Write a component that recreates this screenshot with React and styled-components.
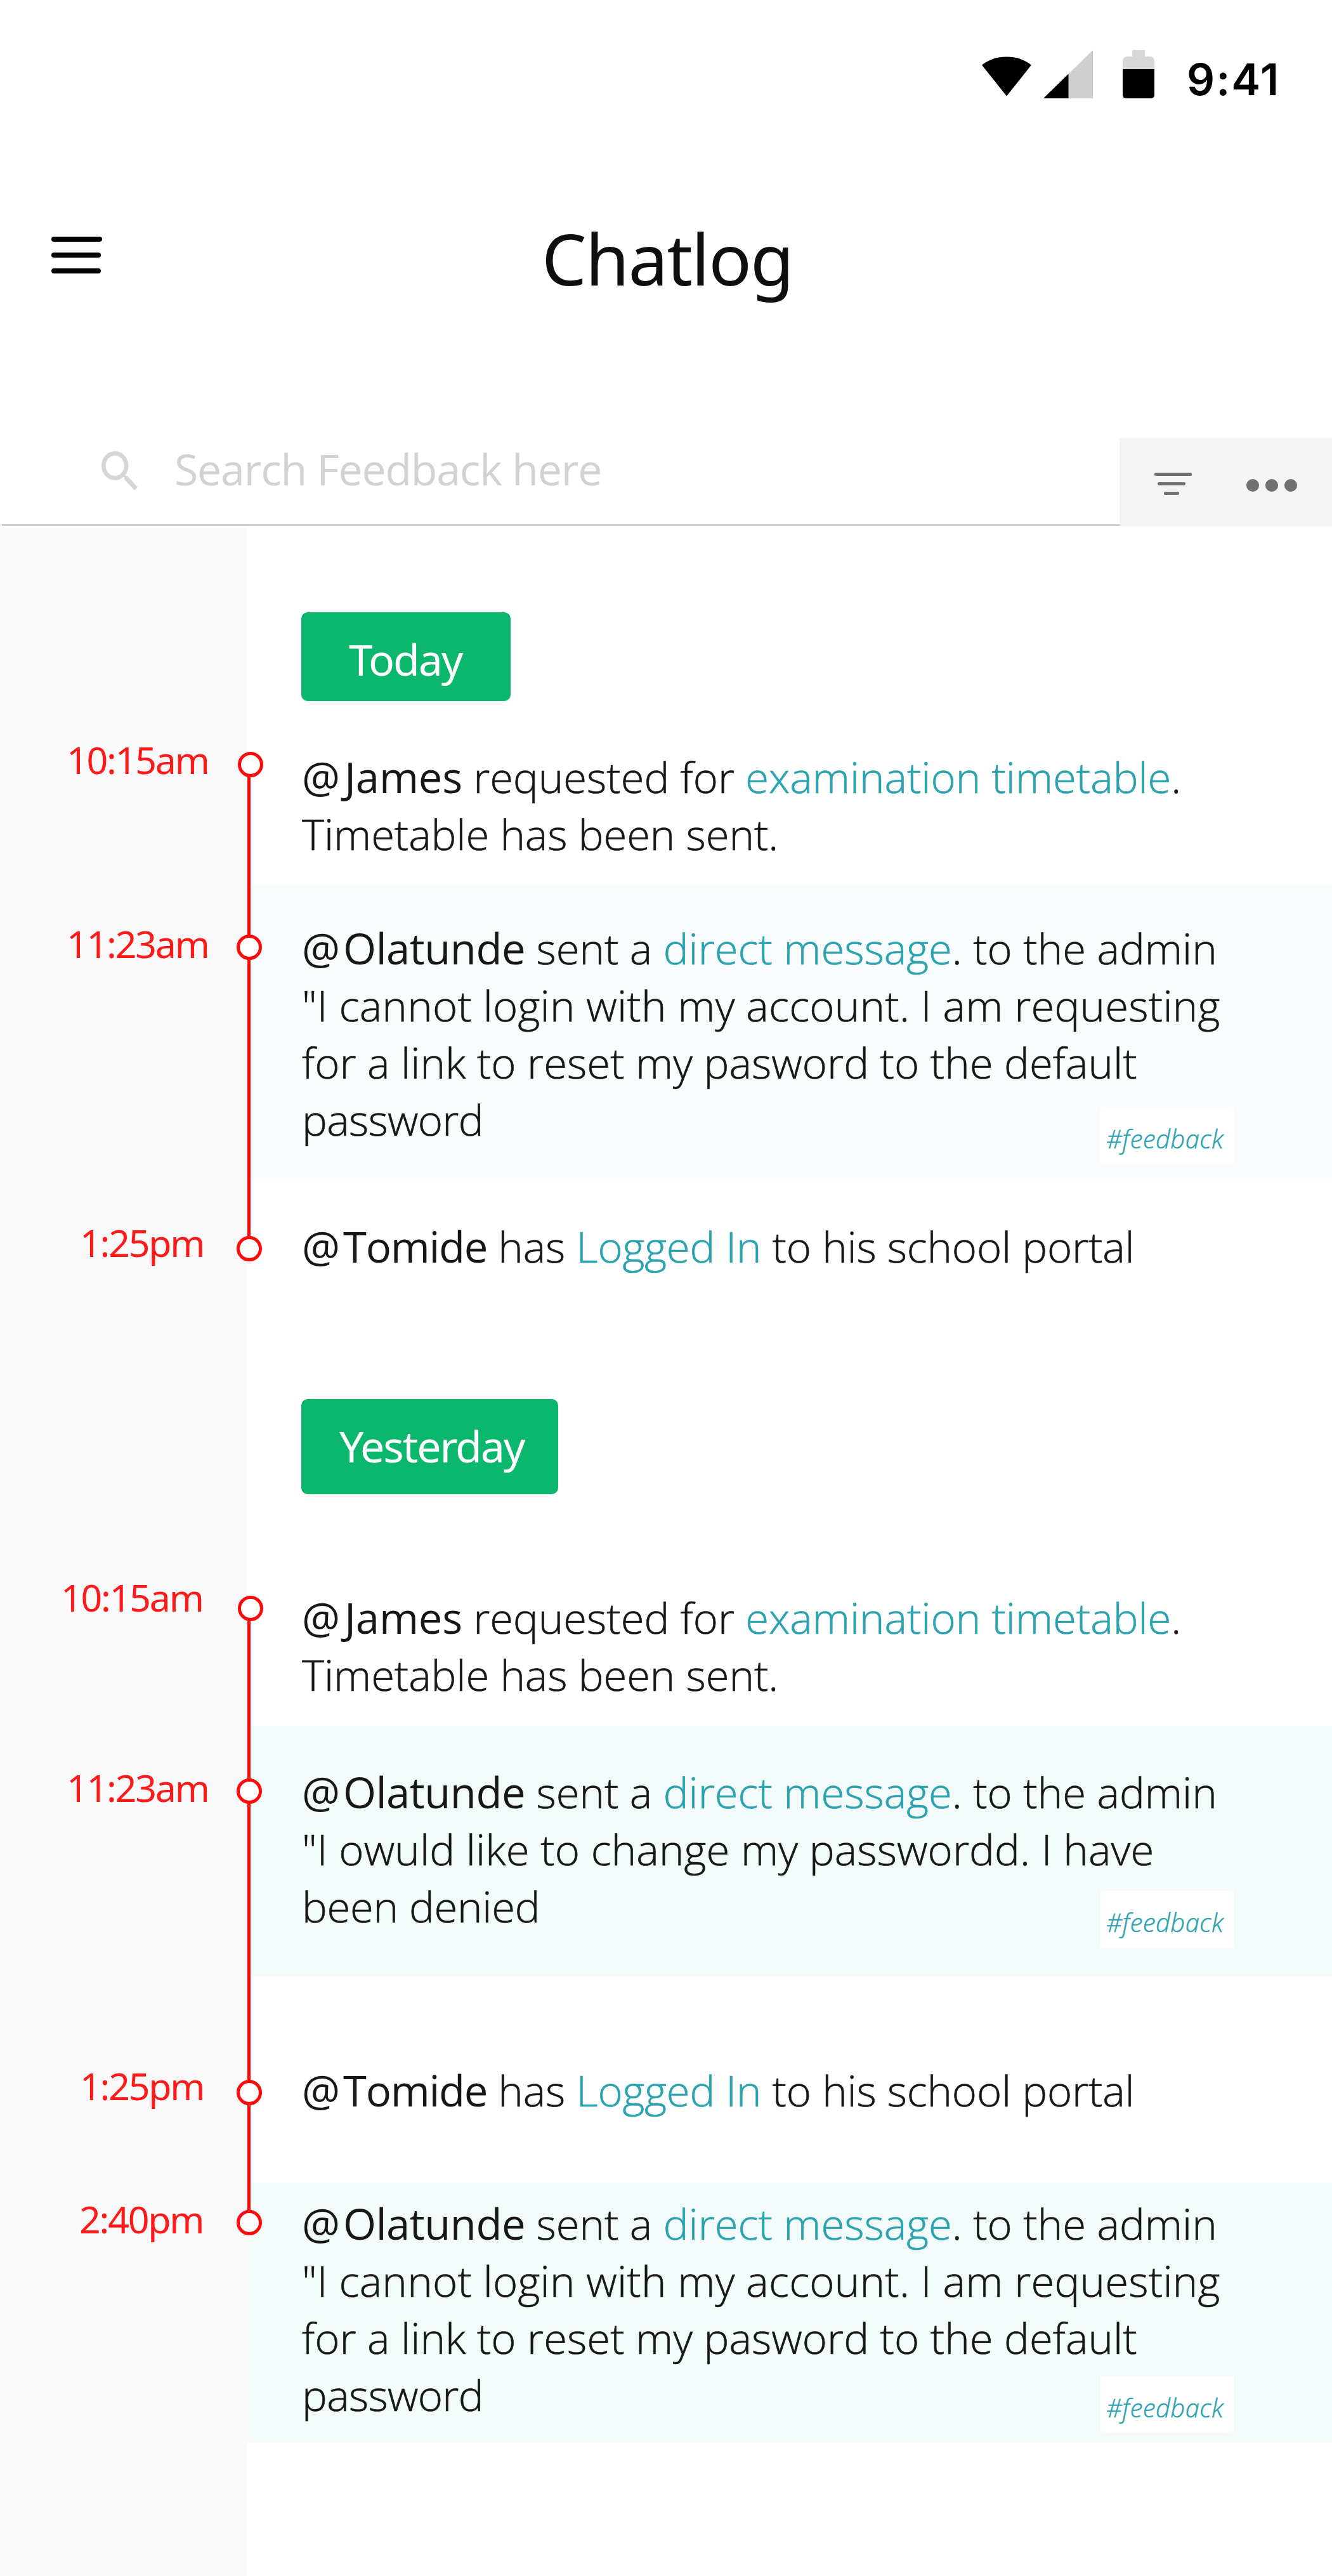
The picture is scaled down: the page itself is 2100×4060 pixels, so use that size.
import React from "react";
import styled, { createGlobalStyle } from "styled-components";

const GlobalStyle = createGlobalStyle`
  * { box-sizing: border-box; }
  body { margin: 0; background: #fff; }
`;

const Screen = styled.div`
  width: 2100px;
  height: 4060px;
  display: flex;
  flex-direction: column;
  overflow: hidden;
  background: #fff;
  font-family: "Open Sans", "Noto Sans", sans-serif;
  color: #171717;
`;

/* Status bar */

const StatusBar = styled.div`
  height: 180px;
  flex: none;
  display: flex;
  align-items: flex-start;
  justify-content: flex-end;
  padding: 79px 84px 0 0;
`;

const WifiIcon = styled.svg`
  width: 78px;
  height: 63px;
  margin: 10px 19px 0 0;
`;

const SignalIcon = styled.svg`
  width: 78px;
  height: 76px;
  margin-right: 47px;
`;

const BatteryIcon = styled.svg`
  width: 50px;
  height: 76px;
  margin-right: 51px;
`;

const Clock = styled.div`
  width: 145px;
  font: 600 69px/84px Inter, sans-serif;
  letter-spacing: 2px;
  margin-top: 4px;
  color: #000;
  white-space: nowrap;
`;

/* Header */

const Header = styled.header`
  height: 510px;
  flex: none;
  display: flex;
  align-items: flex-start;
  padding: 152px 0 0 81px;
`;

const MenuButton = styled.div`
  width: 80px;
  margin: 41px 693px 0 0;
  display: flex;
  flex-direction: column;
  gap: 17px;
`;

const MenuBar = styled.span`
  width: ${(p) => p.$width}px;
  height: 8px;
  border-radius: 4px;
  background: #000;
`;

const Title = styled.h1`
  margin: 0;
  font: 400 112px/150px "Noto Sans", sans-serif;
  letter-spacing: -1.8px;
  color: #100f10;
`;

/* Search */

const Toolbar = styled.div`
  height: 140px;
  flex: none;
  display: flex;
`;

const SearchField = styled.div`
  width: 1762px;
  height: 139px;
  margin-left: 3px;
  display: flex;
  align-items: flex-start;
  border-bottom: 3px solid #d0d0d0;
  padding-left: 157px;
`;

const SearchIcon = styled.svg`
  width: 57px;
  height: 62px;
  margin: 21px 58px 0 0;
`;

const Placeholder = styled.span`
  font-size: 68px;
  line-height: 98px;
  letter-spacing: -1.2px;
  color: #d2d2d2;
  white-space: nowrap;
`;

const Actions = styled.div`
  flex: 1;
  display: flex;
  align-items: flex-start;
  background: #f4f4f4;
  padding-left: 55px;
`;

const Filter = styled.div`
  width: 59px;
  margin: 55px 86px 0 0;
  display: flex;
  flex-direction: column;
  gap: 10px;
`;

const FilterBar = styled.span`
  width: ${(p) => p.$width}px;
  height: 5px;
  margin-left: ${(p) => p.$indent}px;
  border-radius: 2px;
  background: #707070;
`;

const More = styled.div`
  display: flex;
  gap: 10px;
  margin-top: 65px;
`;

const Dot = styled.span`
  width: 20px;
  height: 20px;
  border-radius: 50%;
  background: #707070;
`;

/* Timeline */

const Timeline = styled.main`
  flex: 1;
  padding-top: 135px;
  background: linear-gradient(to right, #f9f9f9 390px, transparent 390px);
`;

const DayBadge = styled.div`
  width: ${(p) => p.$width}px;
  height: ${(p) => p.$height}px;
  margin-left: 475px;
  padding: 4px 0 0 ${(p) => p.$indent}px;
  border-radius: 10px;
  background: #0ab76c;
  color: #fff;
  font: 400 68px/140px "Noto Sans", sans-serif;
  letter-spacing: -2.1px;
`;

const Entries = styled.div`
  position: relative;
  margin-bottom: ${(p) => p.$after}px;
`;

const Track = styled.span`
  position: absolute;
  left: 390px;
  top: ${(p) => p.$top}px;
  width: 5px;
  height: ${(p) => p.$length}px;
  background: #ff0a0a;
`;

const Entry = styled.article`
  position: relative;
  display: grid;
  grid-template-columns: 390px 1fr;
  height: ${(p) => p.$height}px;
`;

const Time = styled.time`
  padding: ${(p) => p.$top}px 0 0 ${(p) => p.$left}px;
  font: 400 59px/80px "Noto Sans", sans-serif;
  letter-spacing: -2.2px;
  color: #ff1a1a;
  white-space: nowrap;
`;

const Message = styled.div`
  padding: ${(p) => p.$top}px 0 0 86px;
  background: ${(p) => p.$tint || "transparent"};
  font-size: 67px;
  font-weight: 300;
  line-height: 90px;
  -webkit-text-stroke-width: 0.6px;
`;

const Line = styled.div`
  height: 90px;
  letter-spacing: ${(p) => p.$spacing || 0}px;
  white-space: nowrap;
`;

const At = styled.span`
  font-weight: 400;
  letter-spacing: 0;
  margin-right: ${(p) => p.$gap}px;
  -webkit-text-stroke-width: 0;
`;

const Name = styled.span`
  font-weight: 400;
  letter-spacing: ${(p) => p.$spacing}px;
  -webkit-text-stroke-width: 0;
`;

const Highlight = styled.span`
  color: #2ba2af;
`;

const Node = styled.span`
  position: absolute;
  z-index: 1;
  left: ${(p) => p.$left}px;
  top: ${(p) => p.$top}px;
  width: 40px;
  height: 40px;
  border: 5px solid #ff0a0a;
  border-radius: 50%;
  background: #fff;
`;

const Tag = styled.span`
  position: absolute;
  left: 1735px;
  top: ${(p) => p.$top}px;
  width: 210px;
  height: 90px;
  padding: 5px 0 0 9px;
  background: #fff;
  color: #2ba2af;
  font-size: 40px;
  font-style: italic;
  font-weight: 300;
  line-height: 90px;
  letter-spacing: 0.5px;
  -webkit-text-stroke-width: 0.5px;
`;

const people = {
  James: { gap: 7, spacing: -0.2 },
  Olatunde: { gap: 5, spacing: -0.5 },
  Tomide: { gap: 5, spacing: -1.3 },
};

const requested = {
  name: "James",
  rest: [" requested for ", "examination timetable", "."],
  spacing: -0.05,
  lines: [["Timetable has been sent.", -0.1]],
};
const loggedIn = {
  name: "Tomide",
  rest: [" has ", "Logged In", " to his school portal"],
  spacing: -0.18,
  lines: [],
};
const messaged = (lines) => ({
  name: "Olatunde",
  rest: [" sent a ", "direct message", ". to the admin"],
  spacing: 0,
  lines,
});
const resetLines = [
  ['"I cannot login with my account. I am requesting', 0.22],
  ["for a link to reset my pasword to the default", 0.04],
  ["password", -0.7],
];
const changeLines = [
  ['"I owuld like to change my passwordd. I have', 0.12],
  ["been denied", -0.3],
];

const days = [
  {
    label: "Today",
    badge: { $width: 330, $height: 140, $indent: 75 },
    after: 135,
    track: { $top: 100, $length: 762 },
    entries: [
      { time: "10:15am", height: 290, timeTop: 52, timeLeft: 105, textTop: 74, node: [375, 80], ...requested },
      { time: "11:23am", height: 465, timeTop: 52, timeLeft: 105, textTop: 54, node: [372.5, 77.5], tint: "#f8fcfd", tag: 350, ...messaged(resetLines) },
      { time: "1:25pm", height: 210, timeTop: 57.5, timeLeft: 126, textTop: 59, node: [372.5, 87.5], ...loggedIn },
    ],
  },
  {
    label: "Yesterday",
    badge: { $width: 405, $height: 150, $indent: 60 },
    after: 0,
    track: { $top: 180, $length: 967 },
    entries: [
      { time: "10:15am", height: 365, timeTop: 122, timeLeft: 96, textTop: 149, node: [375, 160], ...requested },
      { time: "11:23am", height: 395, timeTop: 57, timeLeft: 105, textTop: 59, node: [372.5, 82.5], tint: "#f2fbfa", tag: 260, ...messaged(changeLines) },
      { time: "1:25pm", height: 325, timeTop: 132, timeLeft: 126, textTop: 134, node: [372.5, 162.5], ...loggedIn },
      { time: "2:40pm", height: 410, timeTop: 17, timeLeft: 125, textTop: 19, node: [372.5, 42.5], tint: "#f2fbfa", tag: 305, ...messaged(resetLines) },
    ],
  },
];

function LogEntry({ entry }) {
  const [before, link, after] = entry.rest;
  const person = people[entry.name];
  return (
    <Entry $height={entry.height}>
      <Time $top={entry.timeTop} $left={entry.timeLeft}>{entry.time}</Time>
      <Message $top={entry.textTop} $tint={entry.tint}>
        <Line $spacing={entry.spacing}>
          <At $gap={person.gap}>@</At>
          <Name $spacing={person.spacing}>{entry.name}</Name>
          {before}
          <Highlight>{link}</Highlight>
          {after}
        </Line>
        {entry.lines.map(([text, spacing]) => (
          <Line key={text} $spacing={spacing}>{text}</Line>
        ))}
      </Message>
      <Node $left={entry.node[0]} $top={entry.node[1]} />
      {entry.tag && <Tag $top={entry.tag}>#feedback</Tag>}
    </Entry>
  );
}

export default function App() {
  return (
    <Screen>
      <GlobalStyle />
      <StatusBar>
        <WifiIcon viewBox="0 0 78 63">
          <path d="M0 13.5C10.500 5 24 .5 39 .5s28.500 4.500 39 13L39 62.500z" fill="#000" />
        </WifiIcon>
        <SignalIcon viewBox="0 0 78 76">
          <path d="M78 0v76H0z" fill="#cfcfcf" />
          <path d="M39.500 37.500V76H0z" fill="#000" />
        </SignalIcon>
        <BatteryIcon viewBox="0 0 50 76">
          <path d="M15 0h20v10h8a7 7 0 0 1 7 7v13H0V17a7 7 0 0 1 7-7h8z" fill="#d7d7d7" />
          <path d="M0 30h50v41a5 5 0 0 1-5 5H5a5 5 0 0 1-5-5z" fill="#000" />
        </BatteryIcon>
        <Clock>9:41</Clock>
      </StatusBar>
      <Header>
        <MenuButton>
          <MenuBar $width={80} />
          <MenuBar $width={78} />
          <MenuBar $width={78} />
        </MenuButton>
        <Title>Chatlog</Title>
      </Header>
      <Toolbar>
        <SearchField>
          <SearchIcon viewBox="3 3 17.490 17.490" preserveAspectRatio="none">
            <path
              d="M15.500 14h-.79l-.28-.27A6.471 6.471 0 0 0 16 9.500 6.500 6.500 0 1 0 9.500 16c1.610 0 3.090-.59 4.230-1.570l.27.28v.79l5 4.990L20.490 19l-4.990-5zm-6 0C7.010 14 5 11.990 5 9.500S7.010 5 9.500 5 14 7.010 14 9.500 11.990 14 9.500 14z"
              fill="#d6d6d6"
            />
          </SearchIcon>
          <Placeholder>Search Feedback here</Placeholder>
        </SearchField>
        <Actions>
          <Filter>
            <FilterBar $width={59} $indent={0} />
            <FilterBar $width={44} $indent={5} />
            <FilterBar $width={24} $indent={15} />
          </Filter>
          <More>
            <Dot />
            <Dot />
            <Dot />
          </More>
        </Actions>
      </Toolbar>
      <Timeline>
        {days.map((day) => (
          <React.Fragment key={day.label}>
            <DayBadge {...day.badge}>{day.label}</DayBadge>
            <Entries $after={day.after}>
              {day.entries.map((entry, i) => (
                <LogEntry key={i} entry={entry} />
              ))}
              <Track {...day.track} />
            </Entries>
          </React.Fragment>
        ))}
      </Timeline>
    </Screen>
  );
}
